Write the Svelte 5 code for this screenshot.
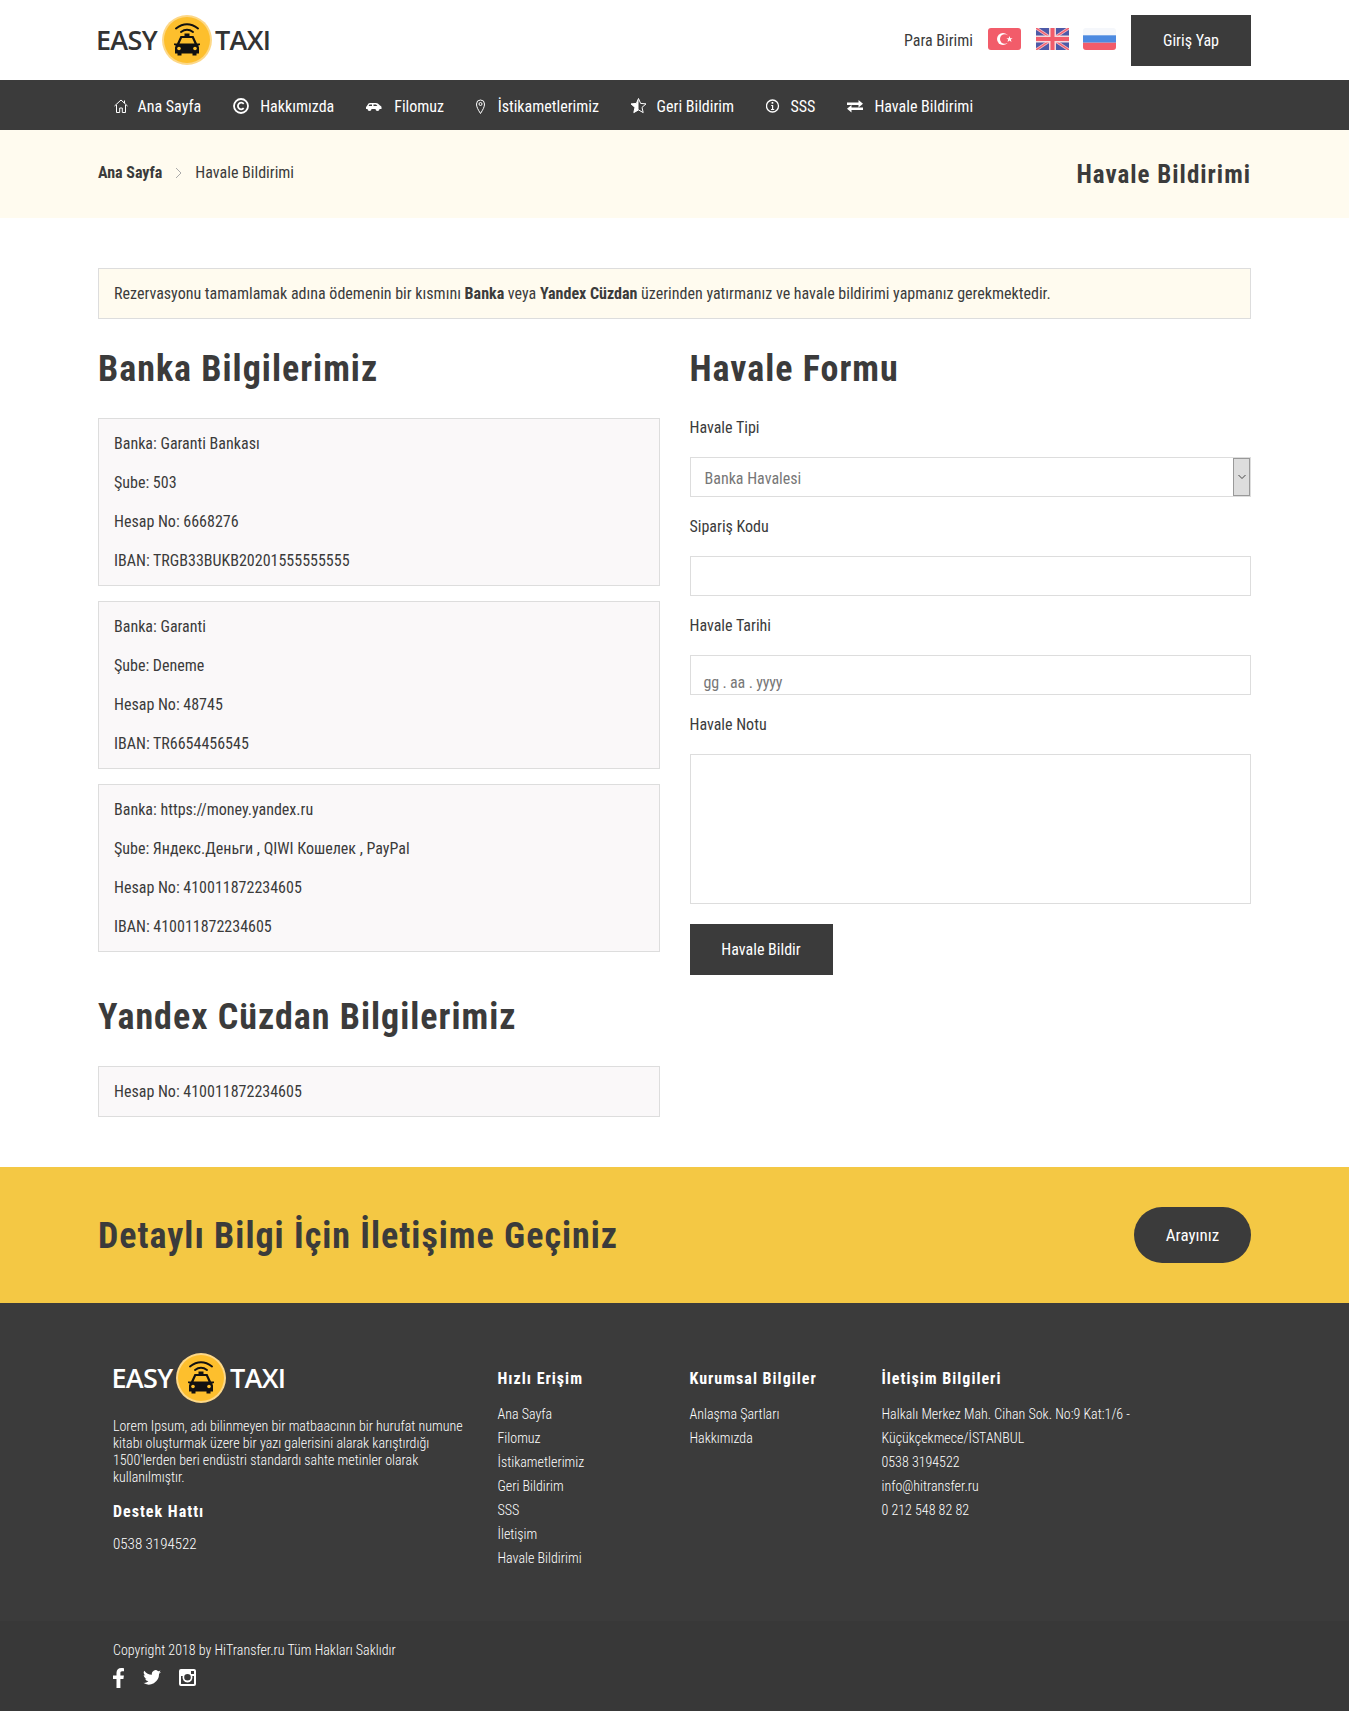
<script>
  const nav = [
    ['home','Ana Sayfa',24,2],['copy','Hakkımızda',27,1],['car','Filomuz',28,1.5],['pin','İstikametlerimiz',21.5,4.5],['star','Geri Bildirim',25.6,1.5],['info','SSS',24.5,2.5],['swap','Havale Bildirimi',27,1]
  ];
  const banks = [
    ['Banka: Garanti Bankası','Şube: 503','Hesap No: 6668276','IBAN: TRGB33BUKB20201555555555'],
    ['Banka: Garanti','Şube: Deneme','Hesap No: 48745','IBAN: TR6654456545'],
    ['Banka: https://money.yandex.ru','Şube: Яндекс.Деньги , QIWI Кошелек , PayPal','Hesap No: 410011872234605','IBAN: 410011872234605']
  ];
  const quick = ['Ana Sayfa','Filomuz','İstikametlerimiz','Geri Bildirim','SSS','İletişim','Havale Bildirimi'];
  const corp = ['Anlaşma Şartları','Hakkımızda'];
  const contact = ['Halkalı Merkez Mah. Cihan Sok. No:9 Kat:1/6 - Küçükçekmece/İSTANBUL','0538 3194522','info@hitransfer.ru','0 212 548 82 82'];
</script>

{#snippet logo(cls)}
  <div class="logo {cls}">
    <span>EASY</span>
    <svg width="50" height="50" viewBox="0 0 50 50">
      <circle cx="25" cy="25" r="25" fill="#fdd887"/>
      <circle cx="25" cy="25" r="23" fill="#fdbf2d"/>
      <g fill="none" stroke="#111" stroke-width="2" stroke-linecap="round">
        <path d="M14 13.500 Q25 5 36 13.500"/><path d="M19 17 Q25 12.500 31 17"/>
      </g>
      <path d="M22.500 18.500h5v2.500h-5z" fill="#111"/>
      <path d="M18.500 21h13l3.500 7.500h3v1.500l-1.700.6.700 1.900v6h-2.500v2h-4v-2h-11v2h-4v-2h-2.500v-6l.7-1.900-1.700-.6v-1.500h3z" fill="#111"/>
      <path d="M20 23h10l2.500 5.500h-15z" fill="#fdbf2d"/>
      <circle cx="17" cy="33.500" r="1.800" fill="#fdbf2d"/><circle cx="33" cy="33.500" r="1.800" fill="#fdbf2d"/>
    </svg>
    <span class="taxi">TAXI</span>
  </div>
{/snippet}

{#snippet icon(n, off)}
  <svg class="ic" width="18" height="18" viewBox="{off} 0 18 18">
    {#if n==='home'}
      <path d="M2.500 9 9 3l6.500 6M4.500 8v7.500h3.200v-4.500h2.600v4.500h3.200V8M12.500 3.500v2.500" fill="none" stroke="#fff" stroke-width="1"/>
    {:else if n==='copy'}
      <circle cx="9" cy="9" r="7" fill="none" stroke="#fff" stroke-width="1.800"/>
      <path d="M11.700 6.800a3.300 3.300 0 1 0 0 4.400" fill="none" stroke="#fff" stroke-width="1.800"/>
    {:else if n==='car'}
      <path d="M2 9.500 4 6.500Q4.500 6 5.500 6h6q1 0 1.800.5L15.500 8.500q1.500.5 1.500 1.500v2h-2a2 2 0 0 1-4 0H7a2 2 0 0 1-4 0H1.500v-2z" fill="#fff"/>
      <path d="M5 7.500h2.500v1.500H4zM9 7.500h2.500l1.500 1.500H9z" fill="#3b3b3b"/>
    {:else if n==='pin'}
      <path d="M9 16.500C6.500 12.500 5 10 5 7a4 4 0 0 1 8 0c0 3-1.500 5.500-4 9.500z" fill="none" stroke="#fff" stroke-width="1"/>
      <circle cx="9" cy="7" r="1.500" fill="none" stroke="#fff"/>
    {:else if n==='star'}
      <path d="M9 1.500l2.100 4.900 5.400.5-4 3.500 1.200 5.200L9 12.900 4.300 15.600l1.200-5.200-4-3.500 5.400-.5z" fill="none" stroke="#fff" stroke-width="1"/>
      <path d="M9 1.500L6.900 6.400l-5.400.5 4 3.500-1.200 5.200L9 12.900z" fill="#fff"/>
    {:else if n==='info'}
      <circle cx="9" cy="9" r="6" fill="none" stroke="#fff" stroke-width="1.300"/>
      <path d="M7.700 8h2v4h1v1h-3.200v-1h1V9h-.8zM8.100 5h1.700v1.700H8.100z" fill="#fff"/>
    {:else}
      <path d="M1 5.500h11.500V3l4.500 3.800-4.500 3.700V8H1zM17 10.500H5.500V8l-0 0-4.500 3.800 4.500 3.700V13H17z" fill="#fff"/>
    {/if}
  </svg>
{/snippet}

<div class="page">
  <header class="top">
    <div class="wrap toprow">
      {@render logo('dark')}
      <div class="topright">
        <span class="cur">Para Birimi</span>
        <svg class="flag" width="33" height="22" viewBox="0 0 33 22"><rect width="33" height="22" rx="3" fill="#f25c6a"/><circle cx="15" cy="11" r="6" fill="#fff"/><circle cx="16.800" cy="11" r="4.800" fill="#f25c6a"/><path d="M21.500 8l.8 2.200h2.300l-1.800 1.400.7 2.300-2-1.400-2 1.400.7-2.300-1.800-1.400h2.300z" fill="#fff"/></svg>
        <svg class="flag uk" width="33" height="22" viewBox="0 0 33 22"><rect width="33" height="22" rx="3" fill="#4d5aa8"/><path d="M0 0 33 22M33 0 0 22" stroke="#f5b8c0" stroke-width="3"/><path d="M0 0 33 22M33 0 0 22" stroke="#f25c6a" stroke-width="1.200"/><path d="M16.500 0v22M0 11h33" stroke="#f5d8dc" stroke-width="7"/><path d="M16.500 0v22M0 11h33" stroke="#f25c6a" stroke-width="4"/></svg>
        <svg class="flag" width="33" height="22" viewBox="0 0 33 22"><rect width="33" height="22" rx="3" fill="#f5f7fb"/><rect y="7.300" width="33" height="7.400" fill="#4d8ae0"/><path d="M0 14.700h33V19a3 3 0 0 1-3 3H3a3 3 0 0 1-3-3z" fill="#f25c6a"/></svg>
        <button class="btn login">Giriş Yap</button>
      </div>
    </div>
  </header>

  <nav class="nav">
    <div class="wrap navrow">
      {#each nav as [i,t,w,o]}
        <a href="#top"><span class="ibox" style="width:{w}px">{@render icon(i,o)}</span><span class="nt">{t}</span></a>
      {/each}
    </div>
  </nav>

  <section class="crumbs">
    <div class="wrap crumbrow">
      <div class="trail"><b>Ana Sayfa</b><svg width="8" height="12" viewBox="0 0 8 12"><path d="M1 1l5 5-5 5" fill="none" stroke="#aaa"/></svg><span>Havale Bildirimi</span></div>
      <h1>Havale Bildirimi</h1>
    </div>
  </section>

  <main class="wrap main">
    <div class="notice">Rezervasyonu tamamlamak adına ödemenin bir kısmını <b>Banka</b> veya <b>Yandex Cüzdan</b> üzerinden yatırmanız ve havale bildirimi yapmanız gerekmektedir.</div>
    <div class="cols">
      <div>
        <h2>Banka Bilgilerimiz</h2>
        {#each banks as b}
          <div class="box">{#each b as l}<p>{l}</p>{/each}</div>
        {/each}
        <h2 class="h2b">Yandex Cüzdan Bilgilerimiz</h2>
        <div class="box"><p>Hesap No: 410011872234605</p></div>
      </div>
      <form>
        <h2>Havale Formu</h2>
        <label for="t">Havale Tipi</label>
        <div class="field sel" id="t"><span>Banka Havalesi</span><i><svg width="8" height="6" viewBox="0 0 8 6"><path d="M.5 1l3.500 3.500L7.500 1" fill="none" stroke="#444"/></svg></i></div>
        <label for="k">Sipariş Kodu</label>
        <input id="k" class="field" />
        <label for="d">Havale Tarihi</label>
        <div class="field date" id="d"><span>gg . aa . yyyy</span></div>
        <label for="n">Havale Notu</label>
        <textarea id="n" class="field ta"></textarea>
        <button type="button" class="btn send">Havale Bildir</button>
      </form>
    </div>
  </main>

  <section class="cta">
    <div class="wrap ctarow">
      <h2>Detaylı Bilgi İçin İletişime Geçiniz</h2>
      <button class="call">Arayınız</button>
    </div>
  </section>

  <footer>
    <div class="wrap fcols">
      <div class="about">
        {@render logo('light')}
        <p class="lorem">Lorem Ipsum, adı bilinmeyen bir matbaacının bir hurufat numune kitabı oluşturmak üzere bir yazı galerisini alarak karıştırdığı 1500'lerden beri endüstri standardı sahte metinler olarak kullanılmıştır.</p>
        <h4>Destek Hattı</h4>
        <p class="tel">0538 3194522</p>
      </div>
      <div class="c1"><h4>Hızlı Erişim</h4>{#each quick as q}<p>{q}</p>{/each}</div>
      <div class="c2"><h4>Kurumsal Bilgiler</h4>{#each corp as q}<p>{q}</p>{/each}</div>
      <div class="c3"><h4>İletişim Bilgileri</h4>{#each contact as q}<p>{q}</p>{/each}</div>
    </div>
    <div class="bottom">
      <div class="wrap binner">
        <p>Copyright 2018 by HiTransfer.ru Tüm Hakları Saklıdır</p>
        <div class="soc">
          <svg width="12" height="20" viewBox="0 0 12 20"><path d="M3.500 20v-9H0V7.500h3.500V4.800C3.500 1.500 5.500 0 8.200 0c1.300 0 2.500.1 2.800.2v3H9.200c-1.500 0-1.800.7-1.800 1.800v2.500h3.500l-.5 3.500h-3v9z" fill="#fff"/></svg>
          <svg width="18" height="15" viewBox="0 0 19 16"><path d="M19 2a7.700 7.700 0 0 1-2.200.6A3.900 3.900 0 0 0 18.500.4a7.700 7.700 0 0 1-2.500 1A3.900 3.900 0 0 0 9.400 5 11 11 0 0 1 1.300.7a3.900 3.900 0 0 0 1.200 5.200 3.900 3.900 0 0 1-1.800-.5c0 1.900 1.300 3.500 3.100 3.900a3.900 3.900 0 0 1-1.700.1 3.900 3.900 0 0 0 3.600 2.700A7.800 7.800 0 0 1 0 13.700 11 11 0 0 0 17 4a7.900 7.900 0 0 0 2-2z" fill="#fff"/></svg>
          <svg width="17" height="17" viewBox="0 0 17 17"><path fill-rule="evenodd" d="M2 0h13a2 2 0 0 1 2 2v13a2 2 0 0 1-2 2H2a2 2 0 0 1-2-2V2a2 2 0 0 1 2-2zM12 2v3h3V2zM2 7v7.500a.5.500 0 0 0 .5.500h12a.5.500 0 0 0 .5-.5V7h-1.700a5 5 0 1 1-9.600 0zM8.500 5a3.300 3.300 0 1 0 0 6.600 3.300 3.300 0 0 0 0-6.600z" fill="#fff"/></svg>
        </div>
      </div>
    </div>
  </footer>
</div>

<style>
  :global(body) { margin: 0; background: #fff; }
  .page { font-family: "Roboto Condensed", "Liberation Sans Narrow", Roboto, sans-serif; font-stretch: condensed; font-size: 16px; color: #3b3b3b; line-height: 1.2; }
  .wrap { width: 1153px; margin: 0 auto; box-sizing: border-box; }
  h1, h2, h4, p { margin: 0; }
  .top { height: 80px; background: #fff; }
  .toprow { height: 100%; display: flex; align-items: center; justify-content: space-between; }
  .logo { display: flex; align-items: center; gap: 5px; font-family: "Open Sans", sans-serif; font-stretch: normal; font-weight: 600; font-size: 27px; letter-spacing: -0.7px; }
  .logo span { padding-top: 1px; }
  .logo .taxi { margin-left: -2px; }
  .logo.dark { color: #333; margin-left: -2px; }
  .logo.light { color: #fff; margin-left: -1.5px; gap: 3.5px; }
  .logo.light .taxi { margin-left: 0.5px; }
  .topright { display: flex; align-items: center; }
  .cur { margin-right: 15px; margin-top: 1px; }
  .flag { margin-right: 15px; margin-top: -3px; }
  .uk { margin-right: 14px; }
  .btn { border: 0; background: #3b3b3b; color: #fff; font: inherit; font-weight: 400; font-size: 16px; padding: 0; }
  .login { width: 120px; height: 51px; padding-top: 2px; }
  .nav { height: 50px; background: #3b3b3b; }
  .navrow { height: 100%; display: flex; align-items: center; gap: 32px; padding-left: 15.5px; }
  .nav a { display: flex; align-items: center; color: #fff; text-decoration: none; font-weight: 400; font-size: 16px; padding-top: 1px; }
  .nt { padding-top: 2px; }
  .ibox { display: block; flex: none; height: 18px; overflow: visible; }
  .ic { display: block; }
  .crumbs { height: 88px; background: #fffbef; }
  .crumbrow { height: 100%; display: flex; justify-content: space-between; align-items: center; }
  .trail { display: flex; align-items: center; gap: 12.5px; margin-top: -3px; }
  .crumbs h1 { font-size: 25px; letter-spacing: 1px; font-weight: 700; padding-top: 2px; }
  .main { padding-top: 50px; padding-bottom: 50px; }
  .notice { height: 51px; box-sizing: border-box; border: 1px solid #ddd; background: #fffbef; padding: 0 15px; line-height: 49px; }
  .cols { display: grid; grid-template-columns: 561.5px 561.5px; gap: 30px; margin-top: 26px; }
  h2 { font-size: 36px; font-weight: 700; letter-spacing: 1px; line-height: 48px; }
  .cols > div > h2 { margin-bottom: 25px; }
  .h2b { margin-top: 41px; }
  .box { border: 1px solid #ddd; background: #faf8f9; padding: 5px 15px; margin-bottom: 15px; }
  .box p { line-height: 39px; }
  .box:last-child { margin-bottom: 0; }
  form { display: flex; flex-direction: column; align-items: flex-start; }
  form > h2 { margin-bottom: 25px; }
  label { display: block; margin-bottom: 20px; height: 19px; line-height: 19px; }
  .field { width: 100%; box-sizing: border-box; border: 1px solid #ddd; background: #fff; height: 40px; display: block; font: inherit; margin: 0 0 20px; padding: 0 14px; color: #777; }
  .sel { position: relative; line-height: 41px; }
  .sel i { position: absolute; right: 0; top: 0; width: 17px; height: 38px; box-sizing: border-box; border: 1px solid #999; background: #ddd; display: flex; align-items: center; justify-content: center; }
  .date { line-height: 54px; overflow: hidden; padding-left: 13px; letter-spacing: -0.15px; }
  .ta { height: 150px; resize: none; }
  .send { width: 143px; height: 51px; }
  .cta { background: #f4c844; height: 136px; }
  .ctarow { height: 100%; display: flex; justify-content: space-between; align-items: center; }
  .ctarow h2 { padding-top: 2px; }
  .call { width: 117px; height: 56px; border-radius: 28px; border: 0; background: #3b3b3b; color: #fff; font: inherit; font-weight: 400; font-size: 17px; }
  footer { background: #3b3b3b; color: #fff; font-size: 14px; font-weight: 300; }
  .fcols { height: 318px; display: grid; grid-template-columns: 399px 192px 192px 1fr; padding-top: 50px; }
  .about { padding-left: 15px; }
  .lorem { line-height: 17px; margin-top: 15px; width: 370px; }
  footer h4 { font-size: 16px; font-weight: 700; letter-spacing: 1px; line-height: 20px; }
  .about h4 { margin-top: 16px; }
  .tel { margin-top: 13px; font-size: 15px; }
  .c1, .c2, .c3 { padding-left: 0.5px; }
  .c1 h4, .c2 h4, .c3 h4 { margin-top: 16px; margin-bottom: 13px; }
  .c1 p, .c2 p, .c3 p { line-height: 24px; width: 260px; }
  .bottom { background: #383838; height: 90px; }
  .binner { padding: 21px 0 0 15px; }
  .soc { display: flex; align-items: center; gap: 18px; margin-top: 9px; }
</style>
